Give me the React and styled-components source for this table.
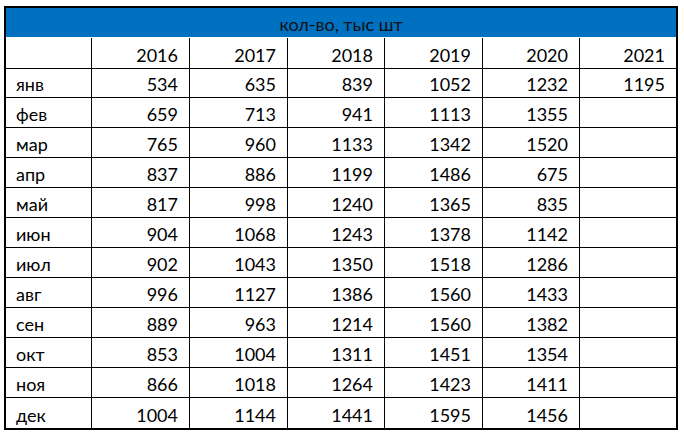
import styled, { createGlobalStyle } from 'styled-components';

const GlobalStyle = createGlobalStyle`
  html, body {
    margin: 0;
    padding: 0;
    background: #ffffff;
  }
  body {
    font-family: Lato, "Open Sans", "Liberation Sans", sans-serif;
  }
`;

const years = ['2016', '2017', '2018', '2019', '2020', '2021'];

const rows = [
  ['янв', 534, 635, 839, 1052, 1232, 1195],
  ['фев', 659, 713, 941, 1113, 1355, ''],
  ['мар', 765, 960, 1133, 1342, 1520, ''],
  ['апр', 837, 886, 1199, 1486, 675, ''],
  ['май', 817, 998, 1240, 1365, 835, ''],
  ['июн', 904, 1068, 1243, 1378, 1142, ''],
  ['июл', 902, 1043, 1350, 1518, 1286, ''],
  ['авг', 996, 1127, 1386, 1560, 1433, ''],
  ['сен', 889, 963, 1214, 1560, 1382, ''],
  ['окт', 853, 1004, 1311, 1451, 1354, ''],
  ['ноя', 866, 1018, 1264, 1423, 1411, ''],
  ['дек', 1004, 1144, 1441, 1595, 1456, ''],
];

export default function App() {
  return (
    <>
      <GlobalStyle />
      <Page>
        <Sheet>
          <Title>кол-во, тыс шт</Title>
          <Cell $header />
          {years.map((y, i) => (
            <Cell key={y} $header $num $last={i === years.length - 1}>
              {y}
            </Cell>
          ))}
          {rows.map((row, r) =>
            row.map((v, c) => (
              <Cell
                key={`${r}-${c}`}
                $num={c > 0}
                $last={c === row.length - 1}
                $bottom={r === rows.length - 1}
              >
                {v}
              </Cell>
            ))
          )}
        </Sheet>
      </Page>
    </>
  );
}

const Page = styled.div`
  padding: 6px 0 0 4px;
`;

const Sheet = styled.div`
  width: 670px;
  border: 2px solid #000;
  display: grid;
  grid-template-columns: 86px 98px 98px 97px 98px 97px 96px;
  grid-auto-rows: 30px;
  color: #000;
  font-size: 18px;
`;

const Title = styled.div`
  grid-column: 1 / -1;
  height: 29px;
  background: #0070c0;
  color: #111;
  display: flex;
  align-items: center;
  justify-content: center;
  padding-top: 3px;
  box-sizing: border-box;
`;

const Cell = styled.div`
  box-sizing: border-box;
  height: ${(p) => (p.$header ? '31px' : '30px')};
  border-right: ${(p) => (p.$last ? 'none' : '1px solid #000')};
  border-bottom: ${(p) => (p.$bottom ? 'none' : '1px solid #000')};
  display: flex;
  align-items: center;
  justify-content: ${(p) => (p.$num ? 'flex-end' : 'flex-start')};
  padding: 3px ${(p) => (p.$num ? '11px' : '0')} 0 ${(p) => (p.$num ? '0' : '10px')};
  line-height: 1;
`;
